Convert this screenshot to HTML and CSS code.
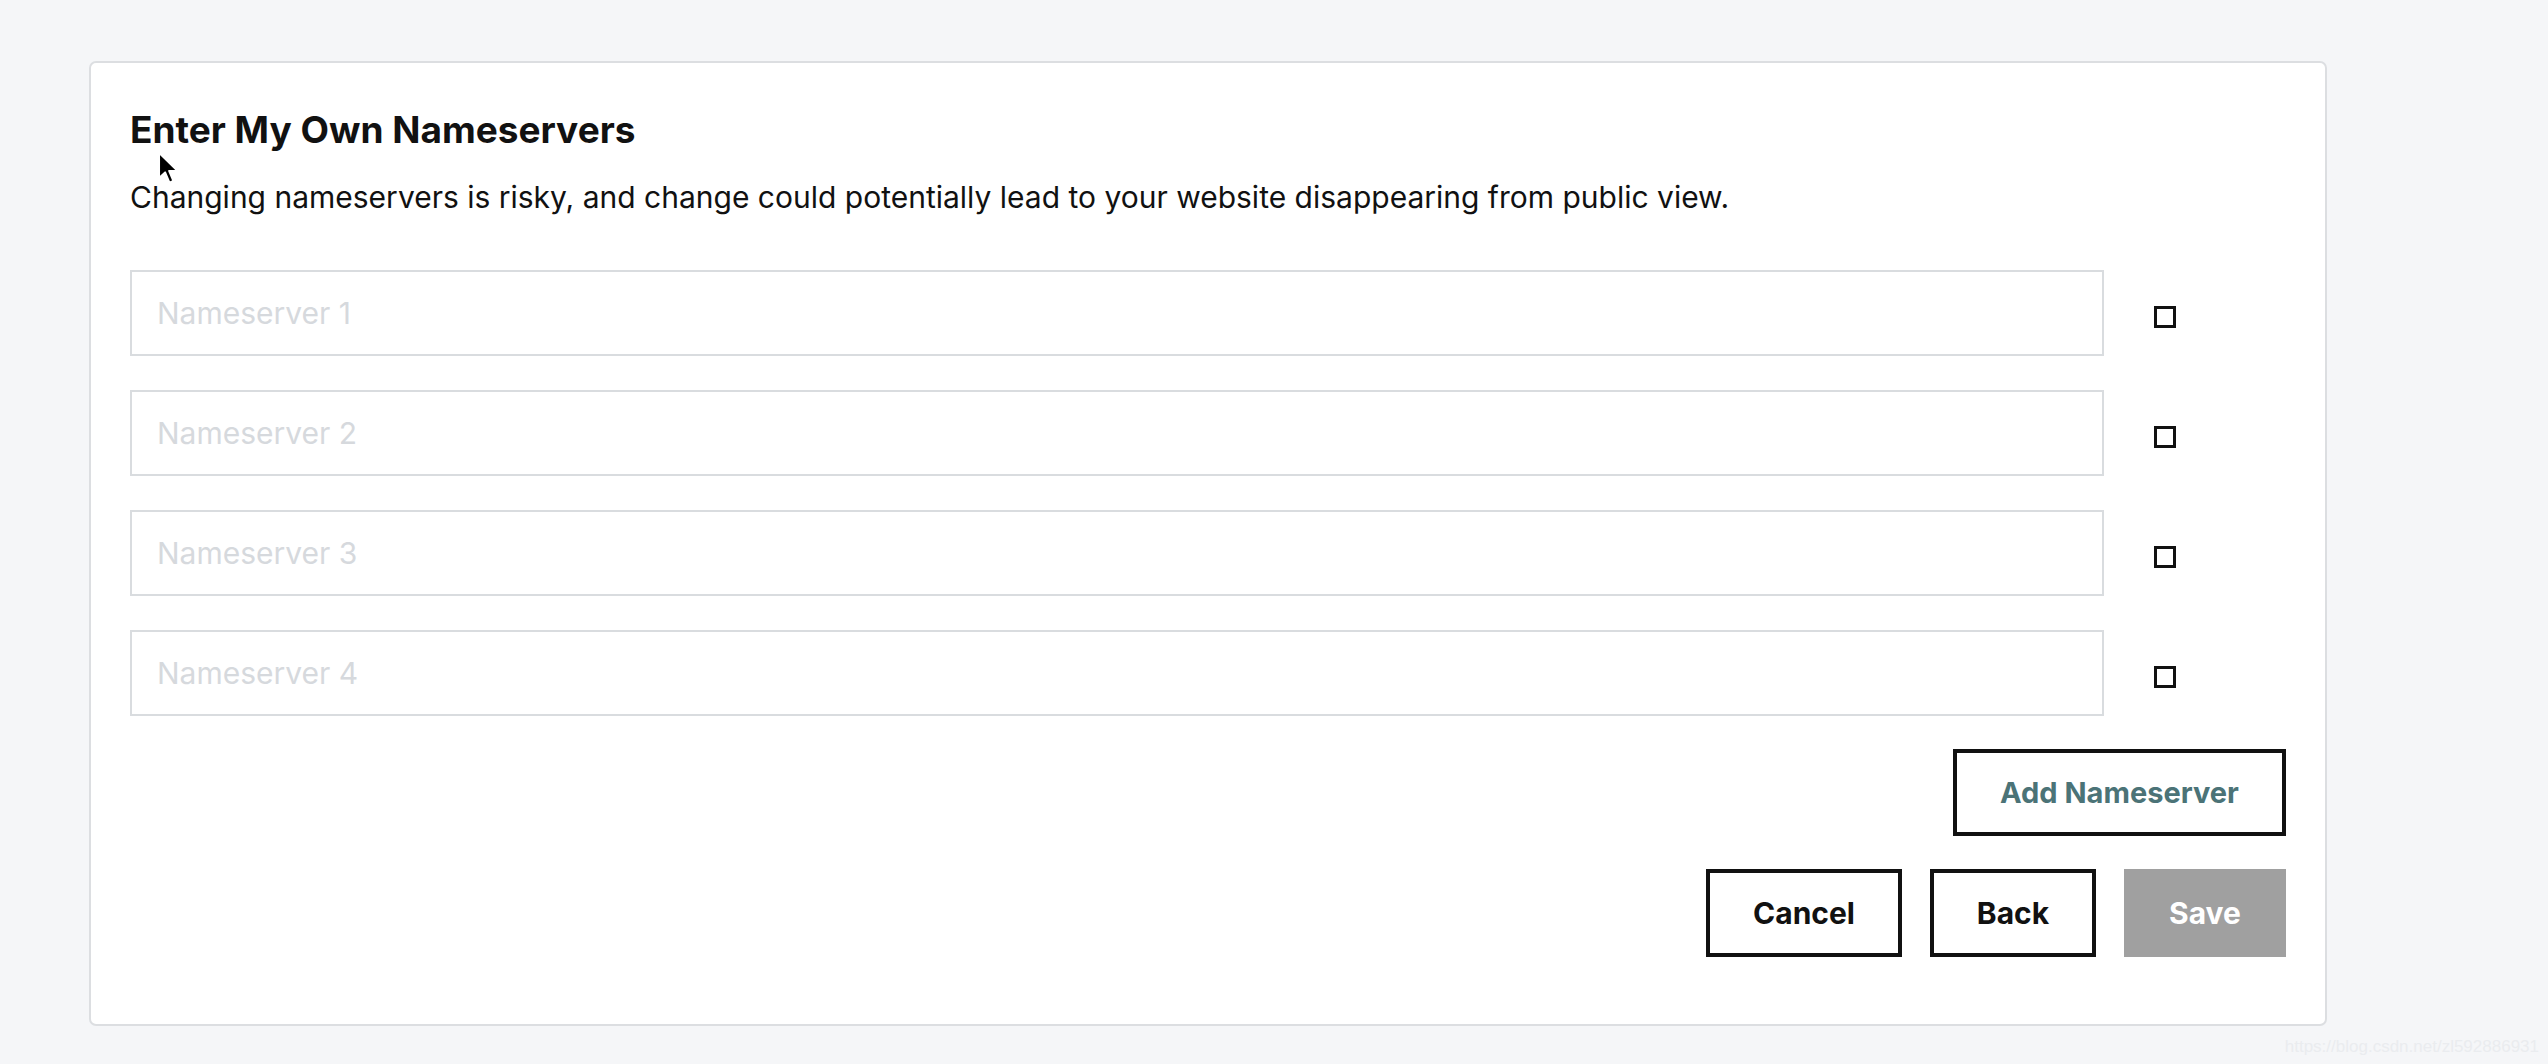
FILE: index.html
```html
<!DOCTYPE html>
<html lang="en">
<head>
<meta charset="utf-8">
<title>Enter My Own Nameservers</title>
<link rel="stylesheet" href="styles.css">
</head>
<body>
<main class="card">
  <h2 class="title">Enter My Own Nameservers</h2>
  <p class="desc">Changing nameservers is risky, and change could potentially lead to your website disappearing from public view.</p>
  <div class="rows">
    <div class="row"><input class="ns" type="text" placeholder="Nameserver 1"><span class="box"></span></div>
    <div class="row"><input class="ns" type="text" placeholder="Nameserver 2"><span class="box"></span></div>
    <div class="row"><input class="ns" type="text" placeholder="Nameserver 3"><span class="box"></span></div>
    <div class="row"><input class="ns" type="text" placeholder="Nameserver 4"><span class="box"></span></div>
  </div>
  <div class="actions">
    <button class="btn btn-add" type="button">Add Nameserver</button>
    <div class="btn-row">
      <button class="btn btn-cancel" type="button">Cancel</button>
      <button class="btn btn-back" type="button">Back</button>
      <button class="btn btn-save" type="button">Save</button>
    </div>
  </div>
  <svg class="cursor" width="26" height="36" viewBox="0 0 20 28"><path d="M1.5 1.5 L1.5 21 L6.2 16.6 L9.6 24.6 L12.6 23.3 L9.3 15.5 L15.8 15.5 Z" fill="#000" stroke="#fff" stroke-width="1.5" stroke-linejoin="round"/></svg>
</main>
<div class="watermark">https://blog.csdn.net/zl592886931</div>
</body>
</html>
```

FILE: styles.css
```css
* { box-sizing: border-box; }
html, body { margin: 0; padding: 0; }
body {
  background: #f5f6f8;
  font-family: Inter, "Noto Sans", sans-serif;
  color: #111;
  width: 2548px;
  height: 1064px;
  position: relative;
  overflow: hidden;
}
.card {
  position: relative;
  margin: 61px 0 0 89px;
  width: 2238px;
  height: 965px;
  background: #fff;
  border: 2px solid #dcdee1;
  border-radius: 7px;
  padding: 44px 39px 0 39px;
}
.title {
  margin: 0;
  font-size: 37px;
  line-height: 45px;
  font-weight: 700;
  letter-spacing: 0;
  color: #111;
}
.desc {
  margin: 27px 0 0 0;
  font-size: 30px;
  line-height: 36px;
  font-weight: 400;
  color: #111;
}
.rows {
  margin-top: 55px;
  display: flex;
  flex-direction: column;
  gap: 34px;
}
.row {
  display: flex;
  align-items: flex-start;
  gap: 50px;
}
.ns {
  width: 1974px;
  height: 86px;
  border: 2px solid #d9dcdf;
  border-radius: 0;
  padding: 0 25px;
  font-family: Inter, "Noto Sans", sans-serif;
  font-size: 30px;
  color: #111;
  background: #fff;
  outline: none;
}
.ns::placeholder { color: #d6d9dd; }
.box {
  display: block;
  margin-top: 36px;
  width: 22px;
  height: 22px;
  border: 3px solid #111;
}
.actions {
  display: flex;
  flex-direction: column;
  align-items: flex-end;
  gap: 33px;
  margin-top: 33px;
  width: 2156px;
}
.btn-row {
  display: flex;
  gap: 28px;
}
.btn {
  height: 88px;
  font-family: Inter, "Noto Sans", sans-serif;
  font-size: 30px;
  font-weight: 700;
  background: #fff;
  border: 4px solid #111;
  border-radius: 0;
  color: #111;
  padding: 0;
  cursor: pointer;
}
.btn-add { width: 333px; height: 87px; color: #4b7377; font-size: 29px; }
.btn-cancel { width: 196px; }
.btn-back { width: 166px; }
.btn-save { width: 162px; background: #a0a0a0; border-color: #a0a0a0; color: #fff; }
.cursor {
  position: absolute;
  left: 66px;
  top: 88px;
}
.watermark {
  position: absolute;
  right: 9px;
  top: 1037px;
  font-family: "Liberation Sans", Arial, sans-serif;
  font-size: 17px;
  color: #eaecef;
}
```
